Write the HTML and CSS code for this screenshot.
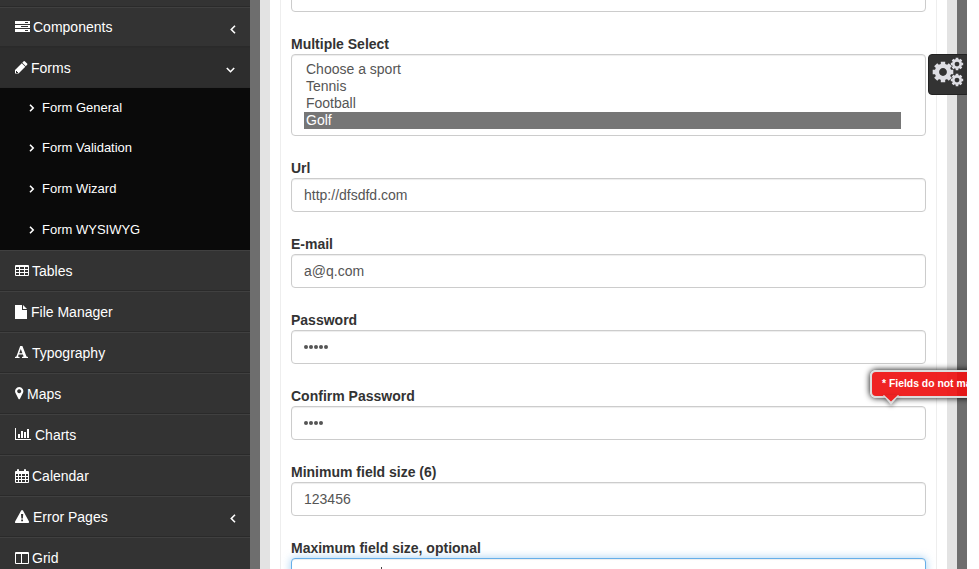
FILE: index.html
```html
<!DOCTYPE html>
<html lang="en">
<head>
<meta charset="utf-8">
<title>Form Validation</title>
<link rel="stylesheet" href="styles.css">
</head>
<body>
<div class="app">
  <nav class="sidebar">
    <div class="row stub"></div>
    <a class="row first"><svg width="15" height="12" viewBox="0 0 15 12"><path fill="#fff" d="M0 0h15v3H0zM0 4h15v3H0zM0 8h15v3H0z"/><path stroke="#333" d="M10 1.500h3M6 5.500h7M10 9.500h3"/></svg><span>Components</span><svg class="arrow" width="6" height="9" viewBox="0 0 6 9"><path d="M5 .8 1.300 4.500 5 8.200"/></svg></a>
    <a class="row active"><svg width="13" height="13" viewBox="0 0 13 13"><path fill="#fff" d="M0 12.500V9L6.800 2.200 10.300 5.700 3.500 12.500zM7.300 1.700 8.700.3Q9.300-.2 10 .4L12.100 2.500Q12.700 3.200 12.100 3.800L10.800 5.200z"/><path fill="#2d2d2d" d="M1 10h1v1h1v1H1z"/></svg><span>Forms</span><svg class="arrow" width="9" height="6" viewBox="0 0 9 6"><path d="M.8 1 4.500 4.700 8.200 1"/></svg></a>
    <div class="submenu">
      <a><svg width="6" height="8" viewBox="0 0 6 8"><path d="M1 .8 4.200 4 1 7.200"/></svg>Form General</a>
      <a><svg width="6" height="8" viewBox="0 0 6 8"><path d="M1 .8 4.200 4 1 7.200"/></svg>Form Validation</a>
      <a><svg width="6" height="8" viewBox="0 0 6 8"><path d="M1 .8 4.200 4 1 7.200"/></svg>Form Wizard</a>
      <a><svg width="6" height="8" viewBox="0 0 6 8"><path d="M1 .8 4.200 4 1 7.200"/></svg>Form WYSIWYG</a>
    </div>
    <a class="row"><svg width="14" height="12" viewBox="0 0 14 12"><path fill="#fff" fill-rule="evenodd" d="M1 0h12q1 0 1 1v9q0 1-1 1H1q-1 0-1-1V1q0-1 1-1zM1 2v2h3V2zM5 2v2h4V2zM10 2v2h3V2zM1 5v2h3V5zM5 5v2h4V5zM10 5v2h3V5zM1 8v2h3V8zM5 8v2h4V8zM10 8v2h3V8z"/></svg><span>Tables</span></a>
    <a class="row"><svg width="13" height="14" viewBox="0 0 13 14"><path fill="#fff" d="M0 0h7v5h5v9H0zM8 0l4 4H8z"/></svg><span>File Manager</span></a>
    <a class="row"><svg width="14" height="13" viewBox="0 0 14 13"><path fill="#fff" fill-rule="evenodd" d="M0 12v-1l1.400-.4L5.200 0h2.200l4.100 10.500 1.500.5v1H7v-1l1.600-.4-.7-2H3.700L3 10.600l1.600.4v1zM4.200 7.200h3.200L5.800 3z"/></svg><span>Typography</span></a>
    <a class="row"><svg width="9" height="13" viewBox="0 0 9 13"><path fill="#fff" fill-rule="evenodd" d="M4.200 0a4.200 4.200 0 0 1 3.700 6L5 11.800q-.8 1-1.600 0L.5 6A4.200 4.200 0 0 1 4.200 0zm0 2.200a2 2 0 1 0 .01 0z"/></svg><span>Maps</span></a>
    <a class="row"><svg width="17" height="13" viewBox="0 0 17 13"><path fill="#fff" d="M0 0h1v11h15v1H0zM3 6h2v4H3zM6 3h2v7H6zM9 4h2v6H9zM12 1h2v9h-2z"/></svg><span>Charts</span></a>
    <a class="row"><svg width="14" height="14" viewBox="0 0 14 14"><path fill="#fff" fill-rule="evenodd" d="M1 2h1V1q0-1 1-1t1 1v1h5V1q0-1 1-1t1 1v1h2q1 0 1 1v10q0 1-1 1H1q-1 0-1-1V3q0-1 1-1zM1 5v2h2V5zM4 5v2h2V5zM7 5v2h3V5zM11 5v2h2V5zM1 8v2h2V8zM4 8v2h2V8zM7 8v2h3V8zM11 8v2h2V8zM1 11v2h2v-2zM4 11v2h2v-2zM7 11v2h3v-2zM11 11v2h2v-2z"/></svg><span>Calendar</span></a>
    <a class="row"><svg width="15" height="13" viewBox="0 0 15 13"><path fill="#fff" fill-rule="evenodd" d="M6.200.6q.9-1.200 1.800 0l6 11q.5 1.400-.9 1.400H1q-1.400 0-.9-1.400zM6 4l.3 4.500h1.600L8.200 4zM6.200 9.500v1.800H8V9.500z"/></svg><span>Error Pages</span><svg class="arrow" width="6" height="9" viewBox="0 0 6 9"><path d="M5 .8 1.300 4.500 5 8.200"/></svg></a>
    <a class="row"><svg width="14" height="12" viewBox="0 0 14 12"><path fill="#fff" fill-rule="evenodd" d="M1 0h12q1 0 1 1v10q0 1-1 1H1q-1 0-1-1V1q0-1 1-1zM1 2v9h5V2zM7 2v9h6V2z"/></svg><span>Grid</span></a>
  </nav>
  <main class="content">
    <form class="panel">
      <div class="field cut"><div class="control"></div></div>
      <div class="field"><label>Multiple Select</label>
        <div class="control list"><div>Choose a sport</div><div>Tennis</div><div>Football</div><div class="selected">Golf</div></div></div>
      <div class="field"><label>Url</label><div class="control">http://dfsdfd.com</div></div>
      <div class="field"><label>E-mail</label><div class="control">a@q.com</div></div>
      <div class="field"><label>Password</label><div class="control dots"><i></i><i></i><i></i><i></i><i></i></div></div>
      <div class="field"><label>Confirm Password</label><div class="control dots"><i></i><i></i><i></i><i></i></div>
        <div class="error">* Fields do not match<svg width="16" height="11" viewBox="0 0 16 11"><path d="M0 0 8 10 16 0z" fill="#ddd"/><path d="M1 0 8 6.500 15 0z" fill="#ee2222"/></svg></div></div>
      <div class="field"><label>Minimum field size (6)</label><div class="control">123456</div></div>
      <div class="field"><label>Maximum field size, optional</label><div class="control focused"><b class="caret"></b></div></div>
    </form>
  </main>
  <div class="settings">
    <svg width="38" height="40" viewBox="0 0 38 40">
      <defs>
        <g id="gear"><circle r="6.100" fill="none" stroke-width="4.400"/><path fill="none" stroke-width="4.400" d="M0-10.300V-7M0 7v3.300M-10.300 0H-7M7 0h3.300M-7.300-7.300-5-5M5 5l2.300 2.300M-7.300 7.300-5 5M5-5l2.300-2.300"/></g>
      </defs>
      <g stroke="#dedee4">
        <use href="#gear" transform="translate(14 17)"/>
        <use href="#gear" transform="translate(28 9) scale(.6)"/>
        <use href="#gear" transform="translate(28 25) scale(.6)"/>
      </g>
    </svg>
  </div>
</div>
</body>
</html>
```
FILE: styles.css
```css
* { box-sizing: border-box; }
body { margin: 0; background: #fff; font: 14px/20px "Liberation Sans", Arial, sans-serif; overflow: hidden; }
.app { position: relative; display: flex; width: 967px; height: 569px; overflow: hidden; background: #6e6e6e; }

.sidebar { width: 250px; height: 569px; overflow: hidden; background: #333; color: #fff; flex: none; }
.row { display: flex; align-items: center; gap: 3px; height: 41px; padding: 0 14px 0 15px; border-top: 1px solid #404040; border-bottom: 1px solid #2a2a2a; }
.row > svg { flex: none; }
.row.stub { height: 7px; border-top: 0; }
.row.first { height: 40px; }
.row.active { background: #2d2d2d; border-color: #2b2b2b; padding-right: 15px; }
.arrow { margin-left: auto; position: relative; top: 2px; }
.arrow path, .submenu path { fill: none; stroke: #fff; stroke-width: 1.6; }
.submenu { display: grid; grid-template-rows: repeat(4, 40.750px); height: 162px; padding-left: 29px; background: #0a0a0a; font-size: 13px; }
.submenu a { display: flex; align-items: center; gap: 7px; height: 39px; }

.content { width: 697px; margin-left: 10px; padding: 0 10px; background: #fff; border: solid #e3e3e3; border-width: 0 10px; height: 569px; flex: none; }
.panel { display: flow-root; width: 657px; height: 569px; padding: 0 10px; border: solid #eee; border-width: 0 1px; }
.field { position: relative; margin-bottom: 22px; }
.field label { display: block; height: 20px; color: #333; font-weight: bold; }
.control { height: 34px; padding: 6px 12px; border: 1px solid #ccc; border-radius: 4px; background: #fff; color: #555; box-shadow: inset 0 1px 1px rgba(0,0,0,.075); }
.cut { margin-top: -22px; }
.control.list { height: 82px; line-height: 17px; padding-right: 24px; }
.list div { padding-left: 2px; }
.list .selected { background: #767676; color: #fff; }
.dots { display: flex; align-items: center; gap: 1px; padding-top: 6px; }
.dots i { width: 4px; height: 4px; border-radius: 50%; background: #555; }
.control.focused { border-color: #66afe9; box-shadow: inset 0 1px 1px rgba(0,0,0,.075), 0 0 8px rgba(102,175,233,.6); }
.caret { display: block; width: 1px; height: 16px; margin: 2px 0 0 77px; background: #444; }

.error { position: absolute; left: 579px; top: -16px; width: 150px; height: 28px; padding: 0 10px; line-height: 23px; border: 2px solid #ddd; border-radius: 6px; background: rgba(238,16,16,.92); box-shadow: 0 0 6px #000; color: #fff; font-size: 10.4px; font-weight: bold; white-space: nowrap; }
.error svg { position: absolute; left: 11px; top: 23px; filter: drop-shadow(0 2px 2px rgba(0,0,0,.4)); }
.settings { position: absolute; left: 928px; top: 54px; width: 42px; height: 41px; border: 1px solid #222; border-radius: 4px; background: #333; }
.settings svg { display: block; }
```
